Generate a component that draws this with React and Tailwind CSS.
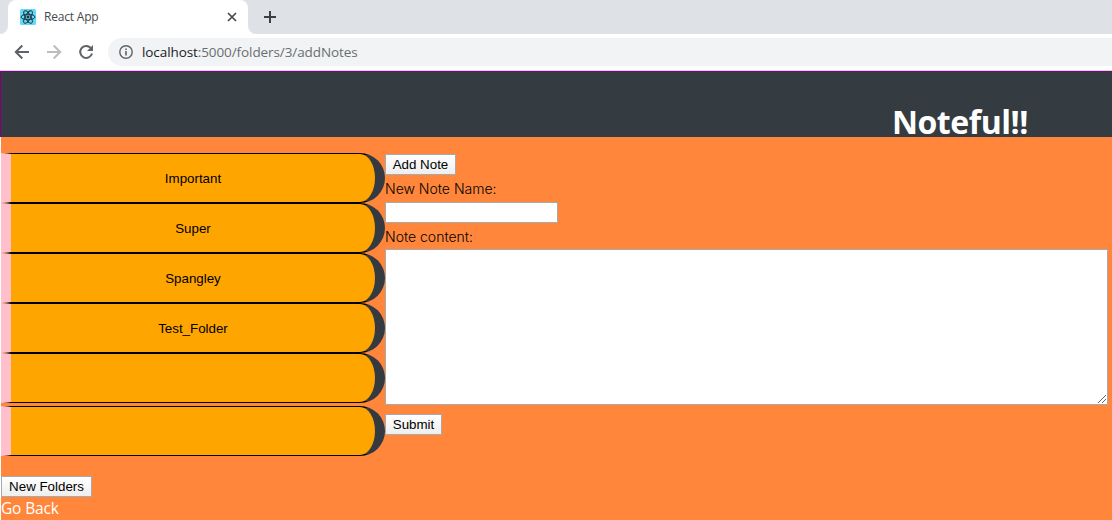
const folders = ['Important', 'Super', 'Spangley', 'Test_Folder', ''];

function ReactLogo() {
  return (
    <svg className="size-4 shrink-0" viewBox="0 0 16 16" fill="none" stroke="#20333a" strokeWidth="0.95">
      <rect width="16" height="16" rx="1.5" fill="#61dafb" stroke="none" />
      <ellipse cx="8" cy="8" rx="7" ry="2.7" />
      <ellipse cx="8" cy="8" rx="7" ry="2.7" transform="rotate(60 8 8)" />
      <ellipse cx="8" cy="8" rx="7" ry="2.7" transform="rotate(120 8 8)" />
      <circle cx="8" cy="8" r="1.4" fill="#20333a" stroke="none" />
    </svg>
  );
}

function TabStrip() {
  return (
    <div className="flex h-[34px] bg-[#dee1e6]">
      <div className="flex w-2 items-end bg-white">
        <div className="h-full w-2 rounded-br-lg bg-[#dee1e6]" />
      </div>
      <div className="flex w-60 items-center rounded-t-lg bg-white pl-3 pr-[11px]">
        <ReactLogo />
        <span className="ml-2 flex-1 whitespace-nowrap font-['Open_Sans',sans-serif] text-[12px] tracking-[-0.2px] text-[#45494d]">React App</span>
        <svg className="size-[10px]" viewBox="0 0 10 10" stroke="#45494d" strokeWidth="1.7">
          <path d="M1 1l8 8M9 1l-8 8" />
        </svg>
      </div>
      <div className="bg-white">
        <div className="flex h-full w-11 items-center rounded-bl-lg bg-[#dee1e6] pl-4">
          <svg className="size-3" viewBox="0 0 12 12" stroke="#3c4043" strokeWidth="2">
            <path d="M6 0v12M0 6h12" />
          </svg>
        </div>
      </div>
    </div>
  );
}

function Toolbar() {
  return (
    <div className="flex h-9 items-center bg-white pl-[14px]">
      <svg className="size-4" viewBox="0 0 16 16" fill="none" stroke="#5f6368" strokeWidth="2">
        <path d="M15 8H2M8.3 1.5L1.8 8l6.5 6.5" />
      </svg>
      <svg className="ml-4 size-4" viewBox="0 0 16 16" fill="none" stroke="#babcbe" strokeWidth="2">
        <path d="M1 8h13M7.7 1.5L14.2 8l-6.5 6.5" />
      </svg>
      <svg className="ml-4 size-4" viewBox="0 0 16 16" fill="none" stroke="#5f6368" strokeWidth="2">
        <path d="M14 9.5A6 6 0 1 1 12.6 3.8" />
        <path d="M15 1v6H9z" fill="#5f6368" stroke="none" />
      </svg>
      <div className="ml-[14px] flex h-7 flex-1 items-center rounded-l-full bg-[#f1f3f4] pl-[11px]">
        <svg className="size-[14px]" viewBox="0 0 14 14" fill="none" stroke="#5f6368" strokeWidth="1.4">
          <circle cx="7" cy="7" r="6.2" />
          <path d="M7 6.1v4.3M7 3.4v1.5" strokeWidth="1.6" />
        </svg>
        <span className="ml-[9px] whitespace-nowrap pt-px font-['Open_Sans',sans-serif] text-[13.5px] tracking-[-0.09px] text-[#6a6e72]">
          <span className="text-[#202124]">localhost</span>:5000/folders/3/addNotes
        </span>
      </div>
    </div>
  );
}

function Button({ className, children }) {
  return (
    <button className={`block h-[21px] whitespace-nowrap border border-[#a9a9a9] bg-linear-to-b from-white to-[#eeeeee] text-center font-['Liberation_Sans',sans-serif] text-[13.33px] leading-[19px] text-black ${className}`}>
      {children}
    </button>
  );
}

function Folder({ name }) {
  return (
    <button className="block h-[50px] w-full rounded-r-[25px] border-y border-r-10 border-l-10 border-y-black border-r-[#343a40] border-l-[#ffc0cb] bg-[#ffa500] pt-px text-center font-['Liberation_Sans',sans-serif] text-[13.33px] text-black">
      {name}
    </button>
  );
}

const labelClass = "block h-6 whitespace-nowrap font-['Inter',sans-serif] text-sm leading-6 font-light text-black";

export default function App() {
  return (
    <div className="h-[520px] w-[1112px] overflow-hidden bg-white">
      <TabStrip />
      <Toolbar />
      <div className="h-px bg-[#d5d8da]" />
      <header className="flex h-[66px] justify-end border-t border-l border-[#800080] bg-[#343b41] pr-[84px]">
        <h1 className="mt-[26px] whitespace-nowrap font-['Open_Sans',sans-serif] text-[32px] leading-[48px] font-bold tracking-[-0.45px] text-white">Noteful!!</h1>
      </header>
      <main className="ml-px flex h-[383px] bg-[#ff863b] pt-4">
        <nav className="w-96 shrink-0">
          {folders.map((name, i) => <Folder key={i} name={name} />)}
          <div className="mt-[3px]"><Folder name="" /></div>
          <Button className="mt-5 w-[91px]">New Folders</Button>
          <a className="-mt-px block whitespace-nowrap font-['Open_Sans',sans-serif] text-[15.5px] leading-6 tracking-[-0.15px] text-white">Go Back</a>
        </nav>
        <section className="pt-px">
          <Button className="w-[71px]">Add Note</Button>
          <label className={`${labelClass} pt-0.5`}>New Note Name:</label>
          <input className="mt-[3px] block h-[21px] w-[173px] border border-[#a9a9a9] bg-white" />
          <label className={`${labelClass} mt-0.5`}>Note content:</label>
          <div className="relative h-[156px] w-[723px]">
            <textarea className="block size-full resize-none border border-[#a9a9a9] bg-white" />
            <svg className="absolute right-[2px] bottom-[2px] size-2" viewBox="0 0 8 8" stroke="#505050" strokeWidth="0.9">
              <path d="M0 8L8 0M4 8l4-4" />
            </svg>
          </div>
          <Button className="mt-[9px] w-[57px]">Submit</Button>
        </section>
      </main>
    </div>
  );
}
